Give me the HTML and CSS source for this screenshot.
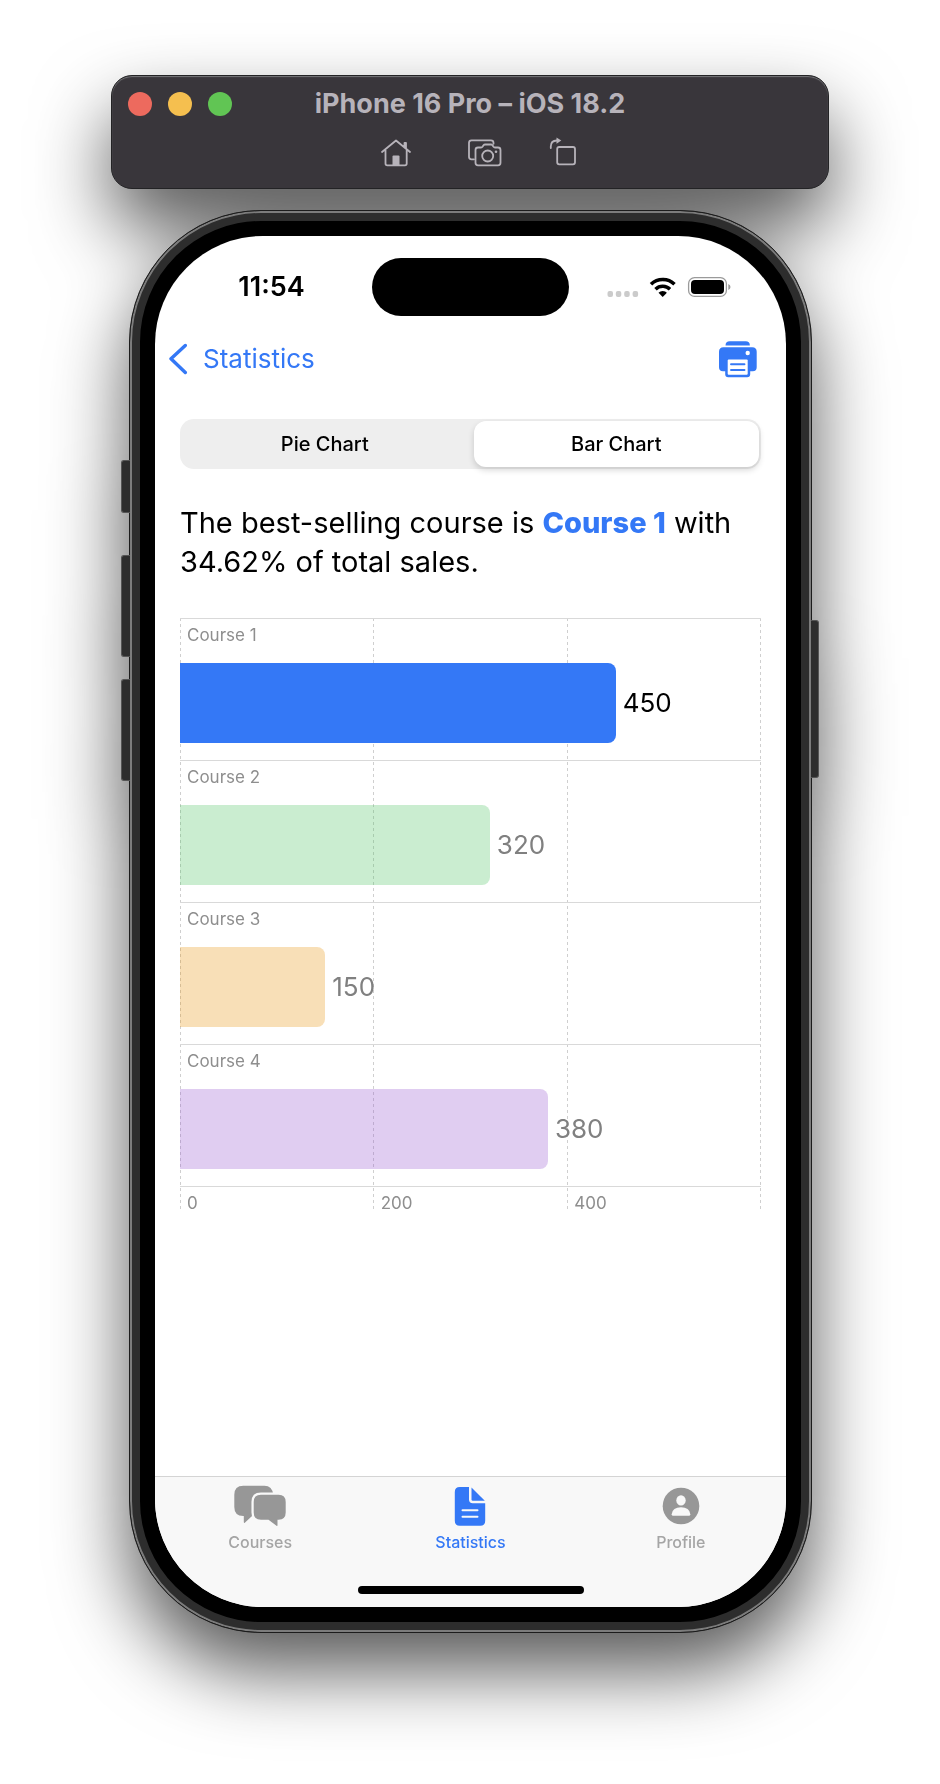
FILE: index.html
```
<!DOCTYPE html>
<html lang="en">
<head>
<meta charset="utf-8">
<meta name="viewport" content="width=device-width, initial-scale=1">
<title>iPhone 16 Pro – iOS 18.2</title>
<link rel="stylesheet" href="styles.css">
</head>
<body>
<div class="stage">
  <header class="toolbar">
    <div class="lights">
      <button class="light light-close" aria-label="Close"></button>
      <button class="light light-min" aria-label="Minimize"></button>
      <button class="light light-zoom" aria-label="Zoom"></button>
    </div>
    <h1 class="device-name">iPhone 16 Pro – iOS 18.2</h1>
    <div class="tools">
      <button class="tool" aria-label="Home">
        <svg width="50" height="32" viewBox="371 136 50 32" fill="none" stroke="currentColor" stroke-width="1.8" stroke-linecap="round" stroke-linejoin="round"><path d="M382 152 396 140.5 410 152M385.5 150v13.500q0 1.800 1.800 1.800h17.600q1.800 0 1.800-1.800V150M406 148v-5h-1.500v3.500"/><path fill="currentColor" stroke="none" d="M392.500 156.500q0-1 1-1h5q1 0 1 1v8.500h-7z"/></svg>
      </button>
      <button class="tool" aria-label="Screenshot">
        <svg width="36" height="32" viewBox="467 136 36 32" fill="none" stroke="currentColor" stroke-width="1.800" stroke-linecap="round" stroke-linejoin="round"><path d="M474 159.300h-2.500q-2.500 0-2.500-2.500v-14q0-2.500 2.500-2.500h19.500q2.500 0 2.500 2.500v1"/><path d="M478 147.500h3q1 0 1.700-1l.8-1.200q.6-.8 1.600-.8h5.800q1 0 1.600.8l.8 1.200q.7 1 1.700 1h3q2.500 0 2.500 2.500v12.800q0 2.500-2.500 2.500h-20q-2.500 0-2.500-2.500V150q0-2.500 2.500-2.500z"/><circle cx="487.700" cy="156" r="5.500"/><circle cx="496" cy="151.700" r="1.300" fill="currentColor" stroke="none"/></svg>
      </button>
      <button class="tool" aria-label="Rotate">
        <svg width="28" height="32" viewBox="549 136 28 32" fill="none" stroke="currentColor" stroke-width="1.800" stroke-linecap="round" stroke-linejoin="round"><rect x="557.200" y="147" width="17.800" height="17.300" rx="2"/><path d="M550.800 148v-1.500q0-5.800 6-6"/><path fill="currentColor" stroke="none" d="m556.500 137.500 4.800 3.100-4.800 3.100z"/></svg>
      </button>
    </div>
  </header>

  <div class="phone">
    <span class="key key-action"></span>
    <span class="key key-up"></span>
    <span class="key key-down"></span>
    <span class="key key-side"></span>
    <div class="screen">
      <div class="status">
        <time class="clock">11:54</time>
        <span class="island"></span>
        <span class="signals">
          <svg width="126" height="24" viewBox="606 275 126 24">
            <g fill="#cbcbcb"><rect x="607.500" y="291" width="5.500" height="6" rx="2"/><rect x="615.800" y="291" width="5.500" height="6" rx="2"/><rect x="624.200" y="291" width="5.500" height="6" rx="2"/><rect x="632.600" y="291" width="5.500" height="6" rx="2"/></g>
            <g fill="none" stroke="#000"><path stroke-width="3.600" d="M651 284.200A17 17 0 0 1 674.500 284.200"/><path stroke-width="3.500" d="M655.500 289.200A10.400 10.400 0 0 1 670 289.200"/></g>
            <path d="m662.700 297-4.200-4.200a6 6 0 0 1 8.400 0z"/>
            <rect x="688.600" y="277.600" width="37.800" height="18.800" rx="6" fill="none" stroke="#9a9a9a" stroke-width="1.300"/>
            <rect x="691" y="280" width="33" height="14" rx="4"/>
            <path fill="#9a9a9a" d="M728.300 284q2.200.8 2.200 3t-2.200 3z"/>
          </svg>
        </span>
      </div>

      <nav class="navbar">
        <a class="back" href="#">
          <svg width="20" height="32" viewBox="169 343 20 32" fill="none" stroke="currentColor" stroke-width="3.400" stroke-linecap="round" stroke-linejoin="round"><path d="m185.300 345.500-14.300 13.300 14.300 13.700"/></svg>
          <span>Statistics</span>
        </a>
        <button class="print" aria-label="Print">
          <svg width="38" height="38" viewBox="719 340 38 38"><g fill="currentColor"><path d="M725.500 345.500q.2-4.200 4.200-4.200h16q4 0 4.200 4.200z"/><path d="M723.500 347.300h28.700q4.500 0 4.500 4.500v15.500q0 4-4 4h-2.500v3q0 3-3 3h-19q-3 0-3-3v-3H723q-4 0-4-4v-15.500q0-4.500 4.500-4.500z"/></g><rect x="727.700" y="359.500" width="20" height="15.300" rx="1" fill="#fff"/><circle cx="747.700" cy="353" r="2.200" fill="#fff"/><path d="M731 364.300h13.500M731 370h13.500" stroke="currentColor" stroke-width="1.900" stroke-linecap="round"/></svg>
        </button>
      </nav>

      <main class="content">
        <div class="segments" role="radiogroup" aria-label="Chart type">
          <label class="segment"><input type="radio" name="chart"><span>Pie Chart</span></label>
          <label class="segment"><input type="radio" name="chart" checked><span>Bar Chart</span></label>
        </div>

        <p class="summary">The best-selling course is <strong>Course 1</strong> with 34.62% of total sales.</p>

        <div class="chart">
          <div class="gridlines"><i></i><i></i><i></i><i></i></div>
          <div class="row"><span class="name">Course 1</span><div class="track"><span class="bar bar-blue" style="width:75%"></span><span class="value value-top">450</span></div></div>
          <div class="row"><span class="name">Course 2</span><div class="track"><span class="bar bar-green" style="width:53.333%"></span><span class="value">320</span></div></div>
          <div class="row"><span class="name">Course 3</span><div class="track"><span class="bar bar-orange" style="width:25%"></span><span class="value">150</span></div></div>
          <div class="row"><span class="name">Course 4</span><div class="track"><span class="bar bar-purple" style="width:63.333%"></span><span class="value">380</span></div></div>
          <div class="axis"><span>0</span><span>200</span><span>400</span></div>
        </div>
      </main>

      <footer class="tabs">
        <div class="tablist">
          <a class="tab" href="#">
            <svg width="54" height="44" viewBox="233 1484 54 44"><path fill="#979797" d="M243.300 1485.700h21q8 0 9 9v21.500h-21.500l-7 6.500q-1 .6-1-.6v-6.100h-.5q-9 0-9-9v-12.300q0-9 9-9z"/><path fill="#979797" stroke="#f8f8f8" stroke-width="4.500" paint-order="stroke" d="M261 1494.700h17.500q7.200 0 7.200 7.200v10.600q0 7-7.200 7.200h-1v5.500q0 1.200-1 .6l-8-6.100H261q-7.300 0-7.300-7.200v-10.600q0-7.200 7.300-7.200z"/></svg>
            <span>Courses</span>
          </a>
          <a class="tab tab-active" href="#" aria-current="page">
            <svg width="32" height="44" viewBox="454.500 1484 32 44"><path fill="currentColor" d="M460.300 1487h9.200v12.500q0 3.700 3.700 3.700h12.500v17.500q0 5-5 5h-20.400q-5 0-5-5V1492q0-5 5-5z"/><path fill="currentColor" d="M472 1487.500 485.300 1500.800h-12q-1.300 0-1.300-1.300z"/><path d="M463 1510.200h15M463 1516.700h15" stroke="#f8f8f8" stroke-width="2" stroke-linecap="round"/></svg>
            <span>Statistics</span>
          </a>
          <a class="tab" href="#">
            <svg width="38" height="44" viewBox="661 1484 38 44"><circle cx="680" cy="1506" r="18.300" fill="#979797"/><g fill="#f8f8f8"><ellipse cx="680" cy="1500.400" rx="4.700" ry="5.200"/><path d="M670.700 1514.200q.8-6.900 9.300-6.900t9.300 6.900q0 1.500-1.500 1.500h-15.600q-1.500 0-1.500-1.500z"/></g></svg>
            <span>Profile</span>
          </a>
        </div>
        <span class="home-bar"></span>
      </footer>
    </div>
  </div>
</div>
</body>
</html>
```
FILE: styles.css
```
* {
  box-sizing: border-box;
}

body {
  margin: 0;
  background: #fff;
  color: #000;
  font-family: Inter, "Liberation Sans", sans-serif;
}

button {
  padding: 0;
  border: 0;
  background: none;
  color: inherit;
  font: inherit;
}

a {
  color: inherit;
  text-decoration: none;
}

svg {
  display: block;
}

.stage {
  display: flex;
  flex-direction: column;
  gap: 21px;
  max-width: 940px;
  min-height: 100vh;
  margin: 0 auto;
  padding: 75px 111px 151px;
  filter: drop-shadow(0 38px 38px rgba(0, 0, 0, 0.65));
}

/* Simulator window */
.toolbar {
  display: grid;
  grid-template-columns: 1fr auto 1fr;
  align-items: center;
  align-content: start;
  row-gap: 16px;
  height: 114px;
  padding: 12px 16px;
  border: 1px solid #232325;
  border-radius: 21px;
  background: #39363b;
  box-shadow: inset 0 1px 1px #77777a;
  color: #b7b3ba;
}

.lights {
  display: flex;
  gap: 16px;
}

.light {
  width: 24px;
  height: 24px;
  border-radius: 50%;
}

.light-close {
  background: #ed6a5e;
}

.light-min {
  background: #f5bf4f;
}

.light-zoom {
  background: #61c554;
}

.device-name {
  margin: 0;
  font-size: 27px;
  font-weight: 700;
  line-height: 32px;
}

.tools {
  display: flex;
  grid-column: 1 / -1;
  justify-content: center;
  gap: 46px;
  padding-left: 8px;
}

/* Phone body */
.phone {
  position: relative;
  display: flex;
  flex: 1;
  flex-direction: column;
  margin: 0 17px 0 18px;
  padding: 25px;
  border: 1px solid #1c1c1c;
  border-radius: 132px;
  background: #000;
  box-shadow: inset 0 0 0 2px #7c7c7c, inset 0 0 0 10px #2d2d2d;
}

.key {
  position: absolute;
  left: -9px;
  width: 9px;
  height: 102px;
  border: 1px solid #555;
  border-right: 0;
  border-radius: 3px 0 0 3px;
  background: #2d2d2d;
}

.key-action {
  top: 249px;
  height: 53px;
}

.key-up {
  top: 344px;
}

.key-down {
  top: 468px;
}

.key-side {
  top: 409px;
  right: -8px;
  left: auto;
  width: 8px;
  height: 158px;
  border: 1px solid #555;
  border-left: 0;
  border-radius: 0 3px 3px 0;
}

.screen {
  display: flex;
  flex: 1;
  flex-direction: column;
  overflow: hidden;
  border-radius: 108px;
  background: #fff;
}

.status {
  display: grid;
  grid-template-columns: 1fr 197px 1fr;
  align-items: center;
  padding-top: 22px;
}

.clock {
  padding-left: 16px;
  font-size: 27px;
  font-weight: 600;
  line-height: 32px;
  text-align: center;
}

.island {
  height: 58px;
  border-radius: 29px;
  background: #000;
}

.signals {
  display: flex;
  justify-content: center;
  padding-right: 17px;
}

.navbar {
  display: flex;
  align-items: center;
  justify-content: space-between;
  height: 86px;
  padding: 0 29px 0 14px;
  color: #3478f6;
}

.back {
  display: flex;
  align-items: center;
  gap: 14px;
  font-size: 26px;
  line-height: 32px;
}

.content {
  flex: 1;
  padding: 17px 25px 40px;
}

.segments {
  display: grid;
  grid-template-columns: 1fr 1fr;
  gap: 6px;
  height: 50px;
  padding: 2px;
  border-radius: 14px;
  background: #eee;
}

.segment {
  display: flex;
}

.segment input {
  position: absolute;
  width: 1px;
  height: 1px;
  margin: 0;
  opacity: 0;
}

.segment span {
  flex: 1;
  border-radius: 12px;
  font-size: 20px;
  font-weight: 500;
  line-height: 46px;
  text-align: center;
}

.segment input:checked + span {
  background: #fff;
  box-shadow: 0 3px 6px rgba(0, 0, 0, 0.16);
}

.summary {
  margin: 34px 0 37px;
  font-size: 29px;
  line-height: 39px;
}

.summary strong {
  color: #3478f6;
  font-weight: 800;
}

/* Bar chart */
.chart {
  position: relative;
}

.gridlines {
  position: absolute;
  inset: 0;
  display: flex;
  justify-content: space-between;
}

.gridlines i {
  width: 1px;
  background: repeating-linear-gradient(#cfcfcf 0 3px, transparent 3px 6px);
}

.row {
  position: relative;
  height: 142px;
  border-top: 1px solid #d9d9d9;
}

.name,
.axis {
  color: #8e8e8e;
  font-size: 17px;
  line-height: 22px;
}

.name {
  display: block;
  padding: 5px 7px 17px;
}

.track {
  display: flex;
  align-items: center;
  gap: 7px;
}

.bar {
  height: 80px;
  border-radius: 0 8px 8px 0;
}

.bar-blue {
  background: #3478f6;
}

.bar-green {
  background: rgba(78, 195, 98, 0.3);
}

.bar-orange {
  background: rgba(232, 148, 15, 0.3);
}

.bar-purple {
  background: rgba(152, 88, 208, 0.3);
}

.value {
  color: #808080;
  font-size: 26px;
  line-height: 32px;
}

.value-top {
  color: #000;
}

.axis {
  display: grid;
  grid-template-columns: repeat(3, 1fr);
  height: 26px;
  padding-top: 5px;
  border-top: 1px solid #d9d9d9;
}

.axis span {
  padding-left: 7px;
}

/* Tab bar */
.tabs {
  padding: 7px 0 13px;
  border-top: 1px solid #d4d4d4;
  background: #f8f8f8;
}

.tablist {
  display: grid;
  grid-template-columns: repeat(3, 1fr);
}

.tab {
  display: flex;
  flex-direction: column;
  align-items: center;
  gap: 4px;
  color: #a5a5a5;
  font-size: 16px;
  font-weight: 500;
  line-height: 20px;
}

.tab-active {
  color: #3478f6;
}

.home-bar {
  display: block;
  width: 226px;
  height: 8px;
  margin: 34px auto 0;
  border-radius: 4px;
  background: #000;
}
```
